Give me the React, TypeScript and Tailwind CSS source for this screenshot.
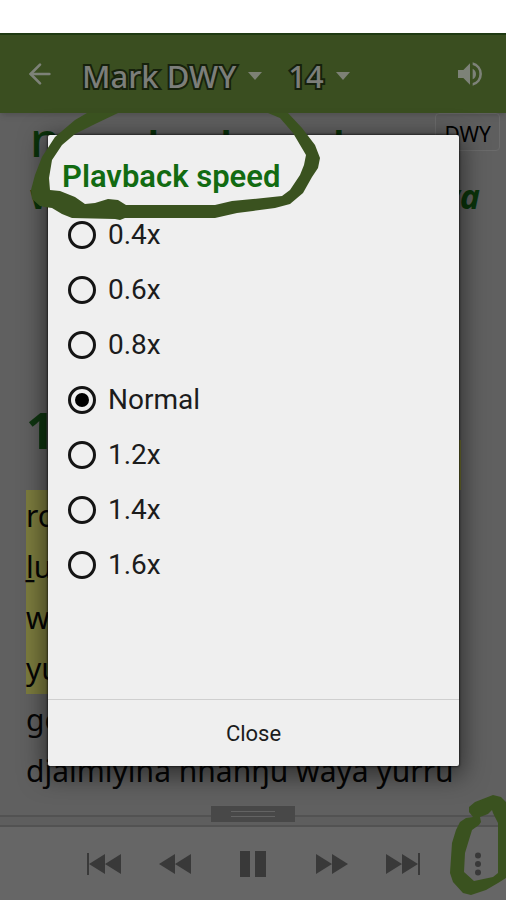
import { useState } from "react";
import { ArrowLeft } from "lucide-react";

const speeds = ["0.4x", "0.6x", "0.8x", "Normal", "1.2x", "1.4x", "1.6x"];

const highlighted = ["ro", "ḻu", "w", "yu"];

function Caret() {
  return (
    <svg viewBox="0 0 14 8" className="h-2 w-3.5 fill-[#7d8175]" aria-hidden="true">
      <path d="M0 0h14L7 8z" />
    </svg>
  );
}

function Header() {
  const outline =
    "flex items-center pt-1 font-['Noto_Sans',sans-serif] text-[31px] font-medium text-[#7c7e7a] [-webkit-text-stroke:4px_#16210c] [paint-order:stroke_fill]";

  return (
    <header className="relative z-10 flex h-20 items-center border-t-2 border-[#1f3a12] bg-[#3a4e20] shadow-md">
      <button aria-label="Back" className="ml-6 text-[#7d8278]">
        <ArrowLeft size={32} strokeWidth={2} />
      </button>
      <button className={`${outline} ml-[26px] gap-3`}>
        Mark DWY
        <Caret />
      </button>
      <button className={`${outline} ml-[26px] gap-3`}>
        14
        <Caret />
      </button>
      <button aria-label="Audio" className="mr-5 ml-auto">
        <svg viewBox="0 0 24 24" className="size-8 fill-[#7d8278]">
          <path d="M3 9v6h4l5 5V4L7 9H3zm13.500 3A4.500 4.500 0 0 0 14 7.970v8.050A4.500 4.500 0 0 0 16.500 12zM14 3.230v2.060a7 7 0 0 1 0 13.420v2.060a9 9 0 0 0 0-17.540z" />
        </svg>
      </button>
    </header>
  );
}

function Reader() {
  return (
    <main className="relative flex-1 overflow-hidden bg-[#606060] px-[26px] font-['Noto_Sans',sans-serif] text-[30px] text-[#050505]">
      <div className="absolute top-0 right-1.5 rounded-sm border border-[#6b6b6b] bg-[#5e5e5e] px-2 pt-1 text-[21px] leading-8 text-black">
        DWY
      </div>
      <h1 className="h-[60px] pl-1 text-[36px] leading-[52px] font-bold whitespace-nowrap text-[#0a330a]">
        <span className="text-[48px] font-medium">n</span>
        <span className="inline-flex gap-[62px] pl-[88px]">
          <span>l</span>
          <span>l</span>
          <span className="pl-10">l</span>
        </span>
      </h1>
      <h2 className="flex h-[50px] justify-between pl-1 text-[34px] leading-[46px] font-bold text-[#0a330a]">
        <span>w</span>
        <span className="italic">ya</span>
      </h2>
      <div className="mt-[166px] flex h-[102px] items-center text-[50px] font-bold text-[#0f3510]">
        <span className="-mt-5">1</span>
      </div>
      <div className="-mt-[51px] mr-[19px] ml-10 h-[50px] bg-[#7e7e35]" />
      <div className="mr-[100px] bg-[#7c7c3e]">
        {highlighted.map((line) => (
          <p key={line} className="leading-[51px]">
            {line}
          </p>
        ))}
      </div>
      <p className="leading-[51px]">go</p>
      <p className="leading-[51px] whitespace-nowrap">djalmiyina nhanŋu waya yurru</p>
    </main>
  );
}

function Player() {
  return (
    <footer className="bg-[#666]">
      <div className="flex h-3 justify-center border-y-2 border-[#525252] bg-[#5e5e5e]">
        <div className="relative -mt-[11px] flex h-4 w-[84px] flex-col items-center justify-center gap-1 bg-[#484848]">
          <i className="h-px w-11 bg-[#636363]" />
          <i className="h-px w-11 bg-[#636363]" />
        </div>
      </div>
      <div className="flex h-[73px] items-center justify-between pr-5 pl-[87px] [&_svg]:fill-[#393939]">
        <button aria-label="Previous chapter">
          <svg viewBox="0 0 34 22" className="h-[22px] w-[34px]">
            <path d="M0 0h2v22H0zM18 1v20L2 11zM34 1v20L18 11z" />
          </svg>
        </button>
        <button aria-label="Rewind">
          <svg viewBox="0 0 32 22" className="h-[22px] w-8">
            <path d="M16 1v20L0 11zM32 1v20L16 11z" />
          </svg>
        </button>
        <button aria-label="Pause" className="px-[11px]">
          <svg viewBox="0 0 26 26" className="size-[26px]">
            <path d="M0 0h10v26H0zM15 0h11v26H15z" />
          </svg>
        </button>
        <button aria-label="Fast forward">
          <svg viewBox="0 0 32 22" className="h-[22px] w-8">
            <path d="M0 1v20l16-10zM16 1v20l16-10z" />
          </svg>
        </button>
        <button aria-label="Next chapter">
          <svg viewBox="0 0 34 22" className="h-[22px] w-[34px]">
            <path d="M32 0h2v22h-2zM0 1v20l16-10zM16 1v20l16-10z" />
          </svg>
        </button>
        <button aria-label="More options" className="pl-3">
          <svg viewBox="0 0 16 24" className="h-6 w-4">
            <circle cx="8" cy="3.500" r="3" />
            <circle cx="8" cy="12" r="3" />
            <circle cx="8" cy="20.500" r="3" />
          </svg>
        </button>
      </div>
    </footer>
  );
}

function SpeedDialog() {
  const [speed, setSpeed] = useState("Normal");

  return (
    <div
      role="dialog"
      aria-labelledby="speed-title"
      className="absolute top-[135px] right-[47px] left-12 z-20 flex h-[631px] flex-col rounded-xs bg-[#efefef] font-[Roboto,sans-serif] shadow-[0_6px_24px_4px_rgba(0,0,0,0.5),0_0_2px_1px_rgba(0,0,0,0.5)]"
    >
      <h2 id="speed-title" className="h-[72px] pt-6 pl-3.5 text-[31px] leading-9 font-semibold text-[#126b12]">
        Plavback speed
      </h2>
      <div className="flex-1">
        {speeds.map((item) => (
          <label key={item} className="flex h-[55px] items-center gap-3 pl-5 text-[28px] text-[#1c1c1c]">
            <input
              type="radio"
              name="speed"
              checked={speed === item}
              onChange={() => setSpeed(item)}
              className="grid size-7 appearance-none place-content-center rounded-full border-3 border-[#141414] before:size-3.5 before:rounded-full checked:before:bg-black"
            />
            {item}
          </label>
        ))}
      </div>
      <button className="h-[67px] border-t border-[#cfcfcf] text-[22px] text-[#1c1c1c]">Close</button>
    </div>
  );
}

// hand-drawn marker rings around the title and the overflow menu
function Marker() {
  return (
    <>
      <svg viewBox="0 0 300 109" className="absolute top-[113px] left-[28px] z-30 h-[109px] w-[300px] fill-[#3a521f]" aria-hidden="true">
        <path
          fillRule="evenodd"
          d="M59 0L47 7 27 24 14 44 7 62 3 77 4 86 12 93 17 94 24 95 34 101 44 105 87 106 92 107 97 105H187L209 100 225 98 247 95 262 91 275 80 284 64 290 55 292 45 287 32 274 15 260 0H240L252 5 265 20 278 42 276 52 272 62 262 77 254 83 225 86 204 88 187 92H98L90 87 80 86 67 90 57 91 47 84 32 78 22 77 21 65 24 47 34 32 47 21 67 11 90 0z"
        />
      </svg>
      <svg viewBox="0 0 56 110" className="absolute right-0 bottom-0 z-30 h-[110px] w-14 fill-[#3a521f]" aria-hidden="true">
        <path
          fillRule="evenodd"
          d="M23 27L19 22 19 17 25 12 43 5 51 7 56 12V88L48 93 36 100 21 105 13 103 3 92 0 83 2 53 6 40 10 32 16 28zM31 32L30 27 38 24 42 20 43 23 48 33V83L43 87 24 91 14 82 15 63 22 40 29 35z"
        />
      </svg>
    </>
  );
}

export default function App() {
  return (
    <div className="relative flex min-h-screen flex-col overflow-hidden bg-white pt-[33px]">
      <Header />
      <Reader />
      <Player />
      <SpeedDialog />
      <Marker />
    </div>
  );
}
